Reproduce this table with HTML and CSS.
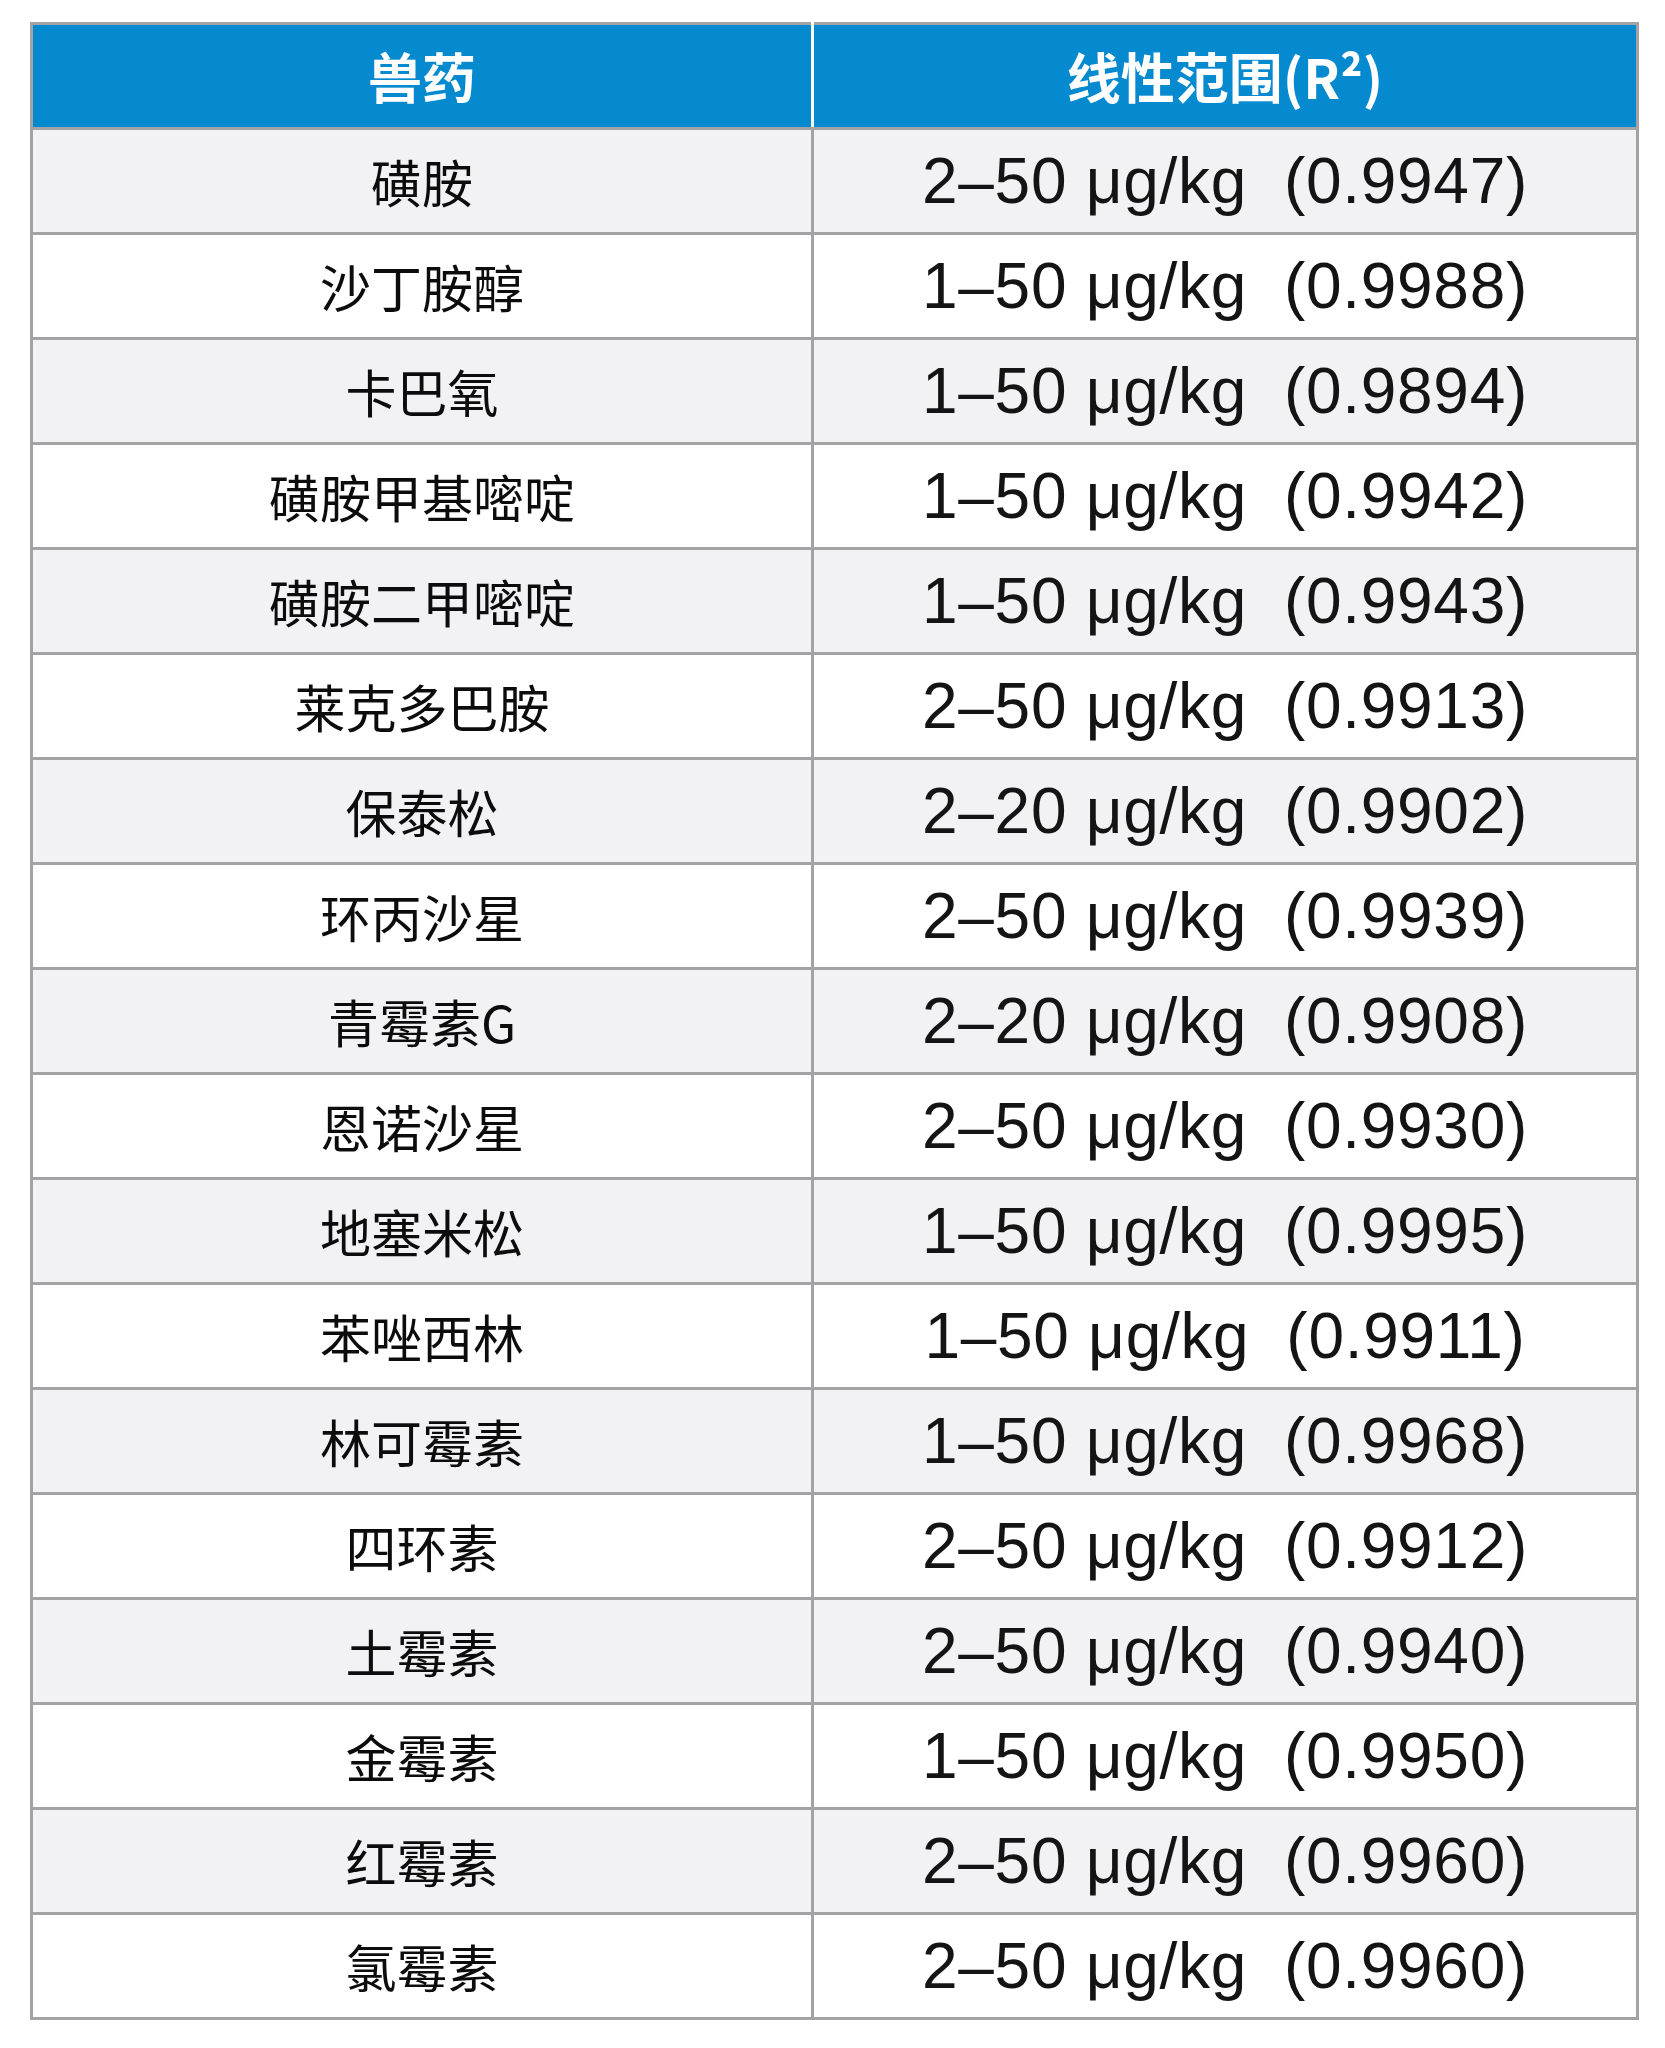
FILE: index.html
```html
<!DOCTYPE html>
<html lang="zh-CN">
<head>
<meta charset="utf-8">
<title>兽药线性范围</title>
<link rel="stylesheet" href="styles.css">
</head>
<body>
<table class="data-table">
  <colgroup><col class="col-name"><col class="col-range"></colgroup>
  <thead>
    <tr><th>兽药</th><th class="th-range">线性范围(R²)</th></tr>
  </thead>
  <tbody>
    <tr><td class="name">磺胺</td><td class="range">2–50 μg/kg&nbsp; (0.9947)</td></tr>
    <tr><td class="name">沙丁胺醇</td><td class="range">1–50 μg/kg&nbsp; (0.9988)</td></tr>
    <tr><td class="name">卡巴氧</td><td class="range">1–50 μg/kg&nbsp; (0.9894)</td></tr>
    <tr><td class="name">磺胺甲基嘧啶</td><td class="range">1–50 μg/kg&nbsp; (0.9942)</td></tr>
    <tr><td class="name">磺胺二甲嘧啶</td><td class="range">1–50 μg/kg&nbsp; (0.9943)</td></tr>
    <tr><td class="name">莱克多巴胺</td><td class="range">2–50 μg/kg&nbsp; (0.9913)</td></tr>
    <tr><td class="name">保泰松</td><td class="range">2–20 μg/kg&nbsp; (0.9902)</td></tr>
    <tr><td class="name">环丙沙星</td><td class="range">2–50 μg/kg&nbsp; (0.9939)</td></tr>
    <tr><td class="name">青霉素G</td><td class="range">2–20 μg/kg&nbsp; (0.9908)</td></tr>
    <tr><td class="name">恩诺沙星</td><td class="range">2–50 μg/kg&nbsp; (0.9930)</td></tr>
    <tr><td class="name">地塞米松</td><td class="range">1–50 μg/kg&nbsp; (0.9995)</td></tr>
    <tr><td class="name">苯唑西林</td><td class="range">1–50 μg/kg&nbsp; (0.9911)</td></tr>
    <tr><td class="name">林可霉素</td><td class="range">1–50 μg/kg&nbsp; (0.9968)</td></tr>
    <tr><td class="name">四环素</td><td class="range">2–50 μg/kg&nbsp; (0.9912)</td></tr>
    <tr><td class="name">土霉素</td><td class="range">2–50 μg/kg&nbsp; (0.9940)</td></tr>
    <tr><td class="name">金霉素</td><td class="range">1–50 μg/kg&nbsp; (0.9950)</td></tr>
    <tr><td class="name">红霉素</td><td class="range">2–50 μg/kg&nbsp; (0.9960)</td></tr>
    <tr><td class="name">氯霉素</td><td class="range">2–50 μg/kg&nbsp; (0.9960)</td></tr>
  </tbody>
</table>
</body>
</html>
```

FILE: styles.css
```css
html, body {
  margin: 0;
  padding: 0;
  background: #ffffff;
}

body {
  padding: 22px 0 0 30px;
  font-family: "Noto Sans CJK SC", "Liberation Sans", sans-serif;
  color: #141414;
}

.data-table {
  width: 1606px;
  border-collapse: collapse;
  border: 3px solid #a3a3a6;
  table-layout: fixed;
}

.col-name { width: 781px; }
.col-range { width: 825px; }

.data-table th {
  height: 102px;
  padding: 0;
  background: #0589cf;
  color: #ffffff;
  font-family: "Noto Sans CJK SC", sans-serif;
  font-weight: 700;
  font-size: 54px;
  line-height: 1;
  text-align: center;
  vertical-align: middle;
  border-left: 3px solid #ffffff;
  border-bottom: 3px solid #a3a3a6;
}

.data-table th:first-child {
  border-left: 3px solid #a3a3a6;
}

.data-table td {
  height: 102px;
  padding: 0;
  text-align: center;
  vertical-align: middle;
  border: 3px solid #a3a3a6;
  line-height: 1;
}

.data-table tbody tr:nth-child(odd) td {
  background: #f2f2f4;
}

.data-table tbody tr:nth-child(even) td {
  background: #ffffff;
}

.name {
  font-family: "Noto Sans CJK SC", sans-serif;
  font-size: 51px;
  font-weight: 400;
  color: #0c0c0c;
}

.range {
  font-family: "Liberation Sans", "Arial", sans-serif;
  font-size: 64px;
  letter-spacing: 0.7px;
  white-space: nowrap;
}
```
